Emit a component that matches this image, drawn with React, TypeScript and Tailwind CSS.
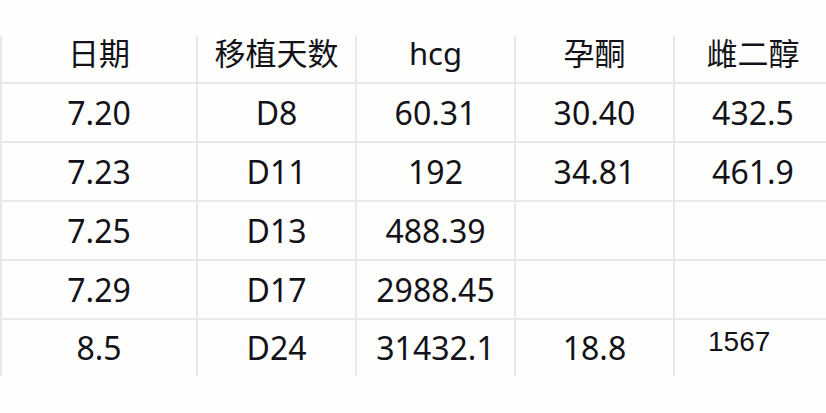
const headers = ["日期", "移植天数", "hcg", "孕酮", "雌二醇"];

const rows = [
  ["7.20", "D8", "60.31", "30.40", "432.5"],
  ["7.23", "D11", "192", "34.81", "461.9"],
  ["7.25", "D13", "488.39", "", ""],
  ["7.29", "D17", "2988.45", "", ""],
  ["8.5", "D24", "31432.1", "18.8", ""],
];

const font = { fontFamily: '"Noto Sans", "Noto Sans CJK SC", sans-serif' };

const App = () => {
  return (
    <div className="w-[826px] h-[413px] overflow-hidden bg-[#fefefd] pt-[36px]" style={font}>
      <div className="grid grid-cols-[196px_159px_159px_159px_158px] w-[845px] border-l-2 border-[#e8e8e8] text-[#121218]">
        {headers.map((h) => (
          <div
            key={h}
            className="h-[48px] flex items-center justify-center pb-[13px] border-r-2 border-b-2 border-[#e8e8e8] text-[31px] leading-[32px]"
          >
            {h}
          </div>
        ))}
        {rows.map((r, i) =>
          r.map((c, j) => {
            const last = i === rows.length - 1;
            return (
              <div
                key={i + "-" + j}
                className={
                  last
                    ? "h-[56px] flex items-center justify-center border-r-2 border-[#e8e8e8] text-[32px] leading-[32px]"
                    : "h-[59px] flex items-center justify-center border-r-2 border-b-2 border-[#e8e8e8] text-[32px] leading-[32px]"
                }
              >
                {last && j === 4 ? (
                  <span
                    className="self-start pt-[8px] pl-[33px] w-full text-[28px] leading-[28px]"
                    style={{ fontFamily: '"Liberation Sans", sans-serif' }}
                  >
                    1567
                  </span>
                ) : (
                  c
                )}
              </div>
            );
          })
        )}
      </div>
    </div>
  );
};

export default App;
